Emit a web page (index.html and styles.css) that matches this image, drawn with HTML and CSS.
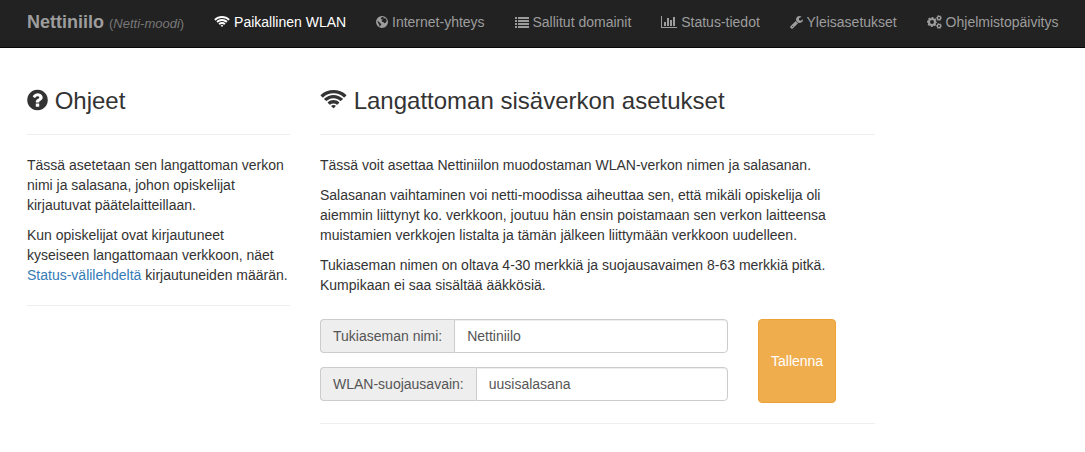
FILE: index.html
```html
<!DOCTYPE html>
<html lang="fi">
<head>
<meta charset="utf-8">
<title>Nettiniilo</title>
<link rel="stylesheet" href="styles.css">
</head>
<body>
<svg class="sprite" aria-hidden="true">
  <symbol id="wifi" viewBox="0 0 2048 1792"><path d="M1024 1523q-20 0-93-73.500t-73-93.500q0-32 62.500-54t103.500-22 103.500 22 62.500 54q0 20-73 93.500t-93 73.500zM1294 1253q-2 0-40-25t-101.500-50-128.500-25-128.500 25-101 50-40.500 25q-18 0-93.500-75t-75.500-93q0-13 10-23 78-77 196-121t233-44 233 44 196 121q10 10 10 23 0 18-75.500 93t-93.500 75zM1567 980q-11 0-23-8-136-105-252-154.500t-268-49.500q-85 0-170.500 22t-149 53-113.500 62-79 53-31 22q-17 0-92-75t-75-93q0-12 10-22 132-132 320-205t380-73 380 73 320 205q10 10 10 22 0 18-75 93t-92 75zM1838 709q-11 0-22-9-179-157-371.500-236.500t-420.500-79.500-420.500 79.500-371.500 236.500q-11 9-22 9-17 0-92.500-75t-75.500-93q0-13 10-23 187-186 445-288t527-102 527 102 445 288q10 10 10 23 0 18-75.500 93t-92.500 75z"/></symbol>
  <symbol id="question" viewBox="128 0 1536 1792"><path d="M1024 1376v-192q0-14-9-23t-23-9h-192q-14 0-23 9t-9 23v192q0 14 9 23t23 9h192q14 0 23-9t9-23zm256-672q0-88-55.500-163t-138.500-116-170-41q-243 0-371 213-15 24 8 42l132 100q7 6 19 6 16 0 25-12 53-68 86-92 34-24 86-24 48 0 85.500 26t37.500 59q0 38-20 61t-68 45q-63 28-115.500 86.500t-52.500 125.500v36q0 14 9 23t23 9h192q14 0 23-9t9-23q0-19 21.500-49.500t54.500-49.500q32-18 49-28.500t46-35 44.500-48 28-60.500 12.500-81zm384 192q0 209-103 385.500t-279.500 279.500-385.500 103-385.500-103-279.500-279.500-103-385.500 103-385.500 279.500-279.500 385.500-103 385.500 103 279.500 279.500 103 385.500z"/></symbol>
  <symbol id="globe" viewBox="128 0 1536 1792"><path fill-rule="evenodd" d="M896 128a768 768 0 1 1 0 1536a768 768 0 1 1 0-1536zM850 290L1010 250L1130 310L1060 400L1180 440L1300 380L1440 560L1510 800L1400 860L1340 1020L1190 1060L1060 900L900 860L860 700L980 600L900 520L800 560L740 440zM340 720L440 840L560 920L660 1060L820 1140L780 1260L680 1340L640 1480L540 1400L540 1200L420 1060L340 900z"/></symbol>
  <symbol id="list" viewBox="0 0 1792 1792"><path d="M32 256h192q32 0 32 32v192q0 32-32 32h-192q-32 0-32-32v-192q0-32 32-32zM416 256h1344q32 0 32 32v192q0 32-32 32h-1344q-32 0-32-32v-192q0-32 32-32zM32 640h192q32 0 32 32v192q0 32-32 32h-192q-32 0-32-32v-192q0-32 32-32zM416 640h1344q32 0 32 32v192q0 32-32 32h-1344q-32 0-32-32v-192q0-32 32-32zM32 1024h192q32 0 32 32v192q0 32-32 32h-192q-32 0-32-32v-192q0-32 32-32zM416 1024h1344q32 0 32 32v192q0 32-32 32h-1344q-32 0-32-32v-192q0-32 32-32zM32 1408h192q32 0 32 32v192q0 32-32 32h-192q-32 0-32-32v-192q0-32 32-32zM416 1408h1344q32 0 32 32v192q0 32-32 32h-1344q-32 0-32-32v-192q0-32 32-32z"/></symbol>
  <symbol id="chart" viewBox="0 0 2048 1792"><path d="M640 896v512h-256v-512zM1024 384v1024h-256v-1024zM2048 1536v128h-2048v-1536h128v1408zM1408 640v768h-256v-768zM1792 256v1152h-256v-1152z"/></symbol>
  <symbol id="wrench" viewBox="64 0 1664 1792"><path d="M448 1472q0-26-19-45t-45-19-45 19-19 45 19 45 45 19 45-19 19-45zm644-420l-682 682q-37 37-90 37-52 0-91-37l-106-108q-38-36-38-90 0-53 38-91l681-681q39 98 114.500 173.500t173.500 114.500zm634-435q0 39-23 106-47 134-164.500 217.500t-258.500 83.500q-185 0-316.500-131.500t-131.500-316.500 131.500-316.500 316.500-131.500q58 0 121.500 16.500t107.500 46.500q16 11 16 28t-16 28l-293 169v224l193 107q5-3 79-48.500t135.500-81 70.500-35.500q15 0 23.500 10t8.500 25z"/></symbol>
  <symbol id="cogs" viewBox="0 0 1920 1792"><g fill="none" stroke="currentColor"><circle cx="640" cy="896" r="390" stroke-width="268"/><circle cx="640" cy="896" r="570" stroke-width="140" pathLength="160" stroke-dasharray="11 9" stroke-dashoffset="5.5"/><circle cx="1536" cy="384" r="212" stroke-width="168"/><circle cx="1536" cy="384" r="330" stroke-width="108" pathLength="120" stroke-dasharray="11 9" stroke-dashoffset="5.5"/><circle cx="1536" cy="1408" r="212" stroke-width="168"/><circle cx="1536" cy="1408" r="330" stroke-width="108" pathLength="120" stroke-dasharray="11 9" stroke-dashoffset="5.5"/></g></symbol>
</svg>
<header class="navbar">
  <a class="brand" href="#"><strong>Nettiniilo</strong> <small>(<em>Netti-moodi</em>)</small></a>
  <nav class="menu">
    <a class="active" href="#"><svg class="icon w16"><use href="#wifi"/></svg> Paikallinen WLAN</a>
    <a href="#"><svg class="icon w12"><use href="#globe"/></svg> Internet-yhteys</a>
    <a href="#"><svg class="icon w14"><use href="#list"/></svg> Sallitut domainit</a>
    <a href="#"><svg class="icon w16"><use href="#chart"/></svg> Status-tiedot</a>
    <a href="#"><svg class="icon w13"><use href="#wrench"/></svg> Yleisasetukset</a>
    <a href="#"><svg class="icon w15"><use href="#cogs"/></svg> Ohjelmistopäivitys</a>
  </nav>
</header>
<main class="content">
  <aside>
    <h3><svg class="icon help"><use href="#question"/></svg> Ohjeet</h3>
    <hr>
    <p>Tässä asetetaan sen langattoman verkon nimi ja salasana, johon opiskelijat kirjautuvat päätelaitteillaan.</p>
    <p>Kun opiskelijat ovat kirjautuneet kyseiseen langattomaan verkkoon, näet <a href="#">Status-välilehdeltä</a> kirjautuneiden määrän.</p>
    <hr>
  </aside>
  <section>
    <h3><svg class="icon signal"><use href="#wifi"/></svg> Langattoman sisäverkon asetukset</h3>
    <hr>
    <p>Tässä voit asettaa Nettiniilon muodostaman WLAN-verkon nimen ja salasanan.</p>
    <p>Salasanan vaihtaminen voi netti-moodissa aiheuttaa sen, että mikäli opiskelija oli aiemmin liittynyt ko. verkkoon, joutuu hän ensin poistamaan sen verkon laitteensa muistamien verkkojen listalta ja tämän jälkeen liittymään verkkoon uudelleen.</p>
    <p>Tukiaseman nimen on oltava 4-30 merkkiä ja suojausavaimen 8-63 merkkiä pitkä. Kumpikaan ei saa sisältää ääkkösiä.</p>
    <form class="settings">
      <div class="fields">
        <div class="group"><label for="ssid">Tukiaseman nimi:</label><input id="ssid" type="text" value="Nettiniilo"></div>
        <div class="group"><label for="key">WLAN-suojausavain:</label><input id="key" type="text" value="uusisalasana"></div>
      </div>
      <button type="button">Tallenna</button>
    </form>
    <hr>
  </section>
</main>
</body>
</html>
```
FILE: styles.css
```css
* { box-sizing: border-box; }
body {
  margin: 0;
  background: #fff;
  color: #333;
  font: 14px/20px "Liberation Sans", Arial, sans-serif;
}
a { color: #337ab7; text-decoration: none; }
.sprite { position: absolute; width: 0; height: 0; }
.icon { height: 1em; fill: currentColor; vertical-align: -2px; }
.w12 { width: 12px; }
.w13 { width: 13px; }
.w14 { width: 14px; }
.w15 { width: 15px; }
.w16 { width: 16px; }
.help { width: 21px; vertical-align: -3px; }
.signal { width: 27px; vertical-align: -3px; }

.navbar {
  display: flex;
  background: #222;
  border-bottom: 1px solid #080808;
  padding-left: 12px;
}
.brand, .menu a {
  padding: 12px 15px 15px;
  color: #9d9d9d;
  white-space: nowrap;
}
.navbar .brand { padding-bottom: 12px; font-size: 18px; }
.brand small { font-size: 13px; color: #777; }
.menu { display: flex; }
.menu .active { color: #fff; }

.content {
  display: grid;
  grid-template-columns: 263fr 555fr 180fr;
  column-gap: 30px;
  padding: 40px 0 8px 27px;
}
h3 { margin: 0; font-size: 24px; font-weight: 500; line-height: 26px; }
p { margin: 0 0 10px; }
hr { margin: 20px 0; border: 0; border-top: 1px solid #eee; }

.settings {
  display: grid;
  grid-template-columns: 408fr 117fr;
  column-gap: 30px;
  margin-top: 24px;
}
.fields { display: grid; row-gap: 14px; align-content: start; }
.group { display: flex; }
.group label {
  padding: 6px 12px;
  background: #eee;
  border: 1px solid #ccc;
  border-right: 0;
  border-radius: 4px 0 0 4px;
  color: #555;
  white-space: nowrap;
}
.group input {
  flex: 1;
  min-width: 0;
  height: 34px;
  padding: 6px 12px;
  border: 1px solid #ccc;
  border-radius: 0 4px 4px 0;
  background: #fff;
  box-shadow: inset 0 1px 1px rgba(0, 0, 0, .075);
  color: #555;
  font: inherit;
}
button {
  justify-self: start;
  height: 84px;
  padding: 6px 12px;
  border: 1px solid #eea236;
  border-radius: 4px;
  background: #f0ad4e;
  color: #fff;
  font: inherit;
}
```
